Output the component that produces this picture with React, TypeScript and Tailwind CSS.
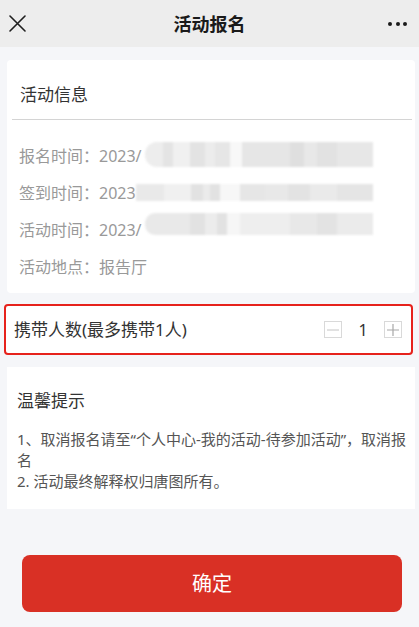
import React from "react";

function Seg({ c }: { c: string }) {
  return <div className={c} />;
}

export default function App() {
  return (
    <div className="w-[419px] h-[627px] overflow-hidden bg-[#f5f6f9] font-['Noto_Sans','Noto_Sans_CJK_SC',sans-serif]">
      {/* Header */}
      <div className="h-[47px] bg-[#ededed] flex items-center">
        <div className="w-[80px] pl-[9px] flex items-center">
          <svg width="17" height="17" viewBox="0 0 17 17" fill="none">
            <path d="M1 1L16 16M16 1L1 16" stroke="#1f1f1f" strokeWidth="1.6" strokeLinecap="round" />
          </svg>
        </div>
        <div className="flex-1 text-center text-[18px] leading-[24px] font-semibold text-[#1a1a1a]">活动报名</div>
        <div className="w-[80px] pr-[12px] flex justify-end items-center gap-[3.5px]">
          <span className="w-[4px] h-[4px] rounded-full bg-[#1a1a1a]" />
          <span className="w-[4px] h-[4px] rounded-full bg-[#1a1a1a]" />
          <span className="w-[4px] h-[4px] rounded-full bg-[#1a1a1a]" />
        </div>
      </div>

      {/* Activity info card */}
      <div className="mt-[13px] ml-[7px] mr-[4px] bg-white rounded-[4px]">
        <div className="h-[59px] pt-[23px] pl-[13px] text-[17px] leading-[24px] text-[#333]">活动信息</div>
        <div className="ml-[5px] mr-[3px] h-px bg-[#d4d4d4]" />
        <div className="pt-[17px] pb-[8px] text-[16px] text-[#999]">
          <div className="h-[37px] flex items-center pl-[12px] pr-[42px]">
            <span className="whitespace-nowrap">报名时间：2023/</span>
            <div className="flex-1 ml-[3px] mb-[3px] h-[25px] flex blur-[1px] rounded-l-[12px] overflow-hidden">
              <Seg c="grow-[18] basis-0 bg-[#ededed]" />
              <Seg c="grow-[10] basis-0 bg-[#e4e4e4]" />
              <Seg c="grow-[17] basis-0 bg-[#f0f0f0]" />
              <Seg c="grow-[15] basis-0 bg-[#e3e3e3]" />
              <Seg c="grow-[10] basis-0 bg-[#ececec]" />
              <Seg c="grow-[15] basis-0 bg-[#e6e6e6]" />
              <Seg c="grow-[12] basis-0 bg-[#f8f8f8]" />
              <Seg c="grow-[48] basis-0 bg-[#e6e6e6]" />
              <Seg c="grow-[13] basis-0 bg-[#dfdfdf]" />
              <Seg c="grow-[13] basis-0 bg-[#e8e8e8]" />
              <Seg c="grow-[20] basis-0 bg-[#e2e2e2]" />
              <Seg c="grow-[36] basis-0 bg-[#e7e7e7]" />
            </div>
          </div>
          <div className="h-[37px] flex items-center pl-[12px] pr-[42px]">
            <span className="whitespace-nowrap">签到时间：2023</span>
            <div className="flex-1 h-[17px] flex blur-[1px]">
              <Seg c="grow-[29] basis-0 bg-[#e9e9e9]" />
              <Seg c="grow-[27] basis-0 bg-[#f0f0f0]" />
              <Seg c="grow-[12] basis-0 bg-[#e2e2e2]" />
              <Seg c="grow-[7] basis-0 bg-[#ebebeb]" />
              <Seg c="grow-[10] basis-0 bg-[#e2e2e2]" />
              <Seg c="grow-[20] basis-0 bg-[#f7f7f7]" />
              <Seg c="grow-[25] basis-0 bg-[#e6e6e6]" />
              <Seg c="grow-[23] basis-0 bg-[#e8e8e8]" />
              <Seg c="grow-[23] basis-0 bg-[#e3e3e3]" />
              <Seg c="grow-[27] basis-0 bg-[#eaeaea]" />
              <Seg c="grow-[36] basis-0 bg-[#e5e5e5]" />
            </div>
          </div>
          <div className="h-[37px] flex items-center pl-[12px] pr-[42px]">
            <span className="whitespace-nowrap">活动时间：2023/</span>
            <div className="flex-1 ml-[3px] mb-[12px] h-[22px] flex blur-[1px] rounded-l-[10px] overflow-hidden">
              <Seg c="grow-[45] basis-0 bg-[#e9e9e9]" />
              <Seg c="grow-[15] basis-0 bg-[#e2e2e2]" />
              <Seg c="grow-[12] basis-0 bg-[#ececec]" />
              <Seg c="grow-[10] basis-0 bg-[#e2e2e2]" />
              <Seg c="grow-[13] basis-0 bg-[#f6f6f6]" />
              <Seg c="grow-[50] basis-0 bg-[#eeeeee]" />
              <Seg c="grow-[27] basis-0 bg-[#e8e8e8]" />
              <Seg c="grow-[20] basis-0 bg-[#e3e3e3]" />
              <Seg c="grow-[36] basis-0 bg-[#ebebeb]" />
            </div>
          </div>
          <div className="h-[37px] flex items-center pl-[12px] pr-[42px]">
            <span className="whitespace-nowrap">活动地点：报告厅</span>
          </div>
        </div>
      </div>

      {/* Carry count */}
      <div className="mt-[11px] ml-[4px] mr-[6px] h-[51px] border-2 border-[#e6221c] rounded-[4px] bg-white flex items-center justify-between pl-[8px] pr-[9px]">
        <span className="text-[17px] leading-[24px] text-[#333]">携带人数(最多携带1人)</span>
        <div className="flex items-center">
          <div className="w-[18px] h-[17px] border border-[#d9d9d9] flex items-center justify-center">
            <svg width="12" height="2" viewBox="0 0 12 2">
              <path d="M0 1H12" stroke="#c4c4c4" strokeWidth="1" />
            </svg>
          </div>
          <span className="w-[42px] text-center text-[16px] leading-[20px] text-[#333]">1</span>
          <div className="w-[18px] h-[17px] border border-[#d9d9d9] flex items-center justify-center">
            <svg width="12" height="12" viewBox="0 0 12 12">
              <path d="M0 6H12M6 0V12" stroke="#a8a8a8" strokeWidth="1.2" />
            </svg>
          </div>
        </div>
      </div>

      {/* Tips card */}
      <div className="mt-[12px] ml-[7px] mr-[4px] bg-white pt-[22px] pl-[10px] pr-[8px] pb-[17px]">
        <div className="text-[17px] leading-[24px] text-[#333]">温馨提示</div>
        <div className="mt-[16px] text-[15px] leading-[21px] text-[#555]">
          <div className="whitespace-nowrap">1、取消报名请至“个人中心-我的活动-待参加活动”，取消报</div>
          <div>名</div>
          <div>2. 活动最终解释权归唐图所有。</div>
        </div>
      </div>

      {/* Confirm button */}
      <div className="mt-[46px] ml-[22px] mr-[17px] h-[57px] rounded-[8px] bg-[#d93025] flex items-center justify-center text-white text-[20px] leading-[26px]">
        确定
      </div>
    </div>
  );
}
